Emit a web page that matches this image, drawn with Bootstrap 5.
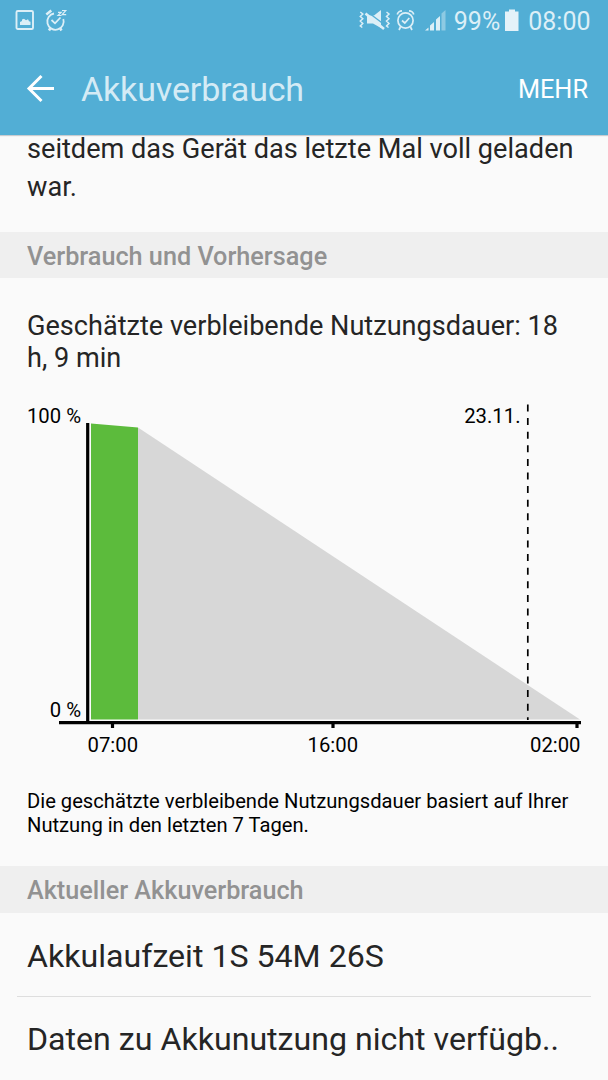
<!DOCTYPE html>
<html lang="de">
<head>
<meta charset="utf-8">
<meta name="viewport" content="width=device-width, initial-scale=1">
<title>Akkuverbrauch</title>
<link href="https://cdn.jsdelivr.net/npm/bootstrap@5.3.0/dist/css/bootstrap.min.css" rel="stylesheet">
<style>
body{font-family:Roboto,"Noto Sans",sans-serif;background:#fafafa;color:#252525;height:1080px;overflow:hidden}
.app-head{height:135px;background:#52aed5;box-shadow:0 1px 1px #c9ccd0}
.status-row{height:42px;padding:0 17.500px 0 15px;color:#dceff7;font-size:25px;line-height:40px}
.status-row span{padding-top:2px}
.status-row svg,.title-row svg{display:block;flex:none}
.title-row{height:93px;padding:0 20px 0 26px;color:#fff}
.page-title{font-size:34px;line-height:40px;color:#d4ebf5;letter-spacing:-.15px;padding-left:1px}
.more-btn{font-size:25.3px;line-height:30px;color:#fff;padding-top:2px}
.intro{height:96.500px;padding:1px 27px 0;font-size:27.130px}
.intro-first{line-height:27px}
.intro-last{line-height:48px}
.section-title{height:46.500px;padding:2px 27px 0;background:#efefef;color:#929292;font-size:25.230px;font-weight:500;line-height:46px}
.usage{height:588px}
.estimate{padding:32px 27px 0;font-size:27.1px;line-height:32px}
.chart{display:block;height:380px;margin-top:16px}
.chart text{font-size:20.3px;fill:#000}
.note{padding:19px 27px 0;font-size:20.180px;line-height:24px;color:#000}
.usage-item{height:83.500px;padding:3px 10px 0;margin:0 17px;font-size:32.130px;line-height:81px}
.usage-item+.usage-item{border-top:1.500px solid #dedede;padding-top:2px}
</style>
</head>
<body>
<header class="app-head">
  <div class="status-row d-flex align-items-center">
    <svg width="60" height="42" viewBox="0 0 60 42" fill="none" stroke="#dceff7">
      <rect x="1.500" y="11" width="16.500" height="18" rx="1.300" stroke-width="1.900"/>
      <path d="M5 25v-3l2-1v-1.500l2-.8 2 1.500 2-1 1 2 1.500.5V25z" fill="#dceff7" stroke="none"/>
      <path d="M39 13.500A8.200 8.200 0 1 0 48.300 19M36.500 20l3.500 3.300 5.500-5.800" stroke-width="1.800"/>
      <path d="M31.300 14.500l5-4M35.500 28l-1.500 2.500M45 28l1.500 2.500" stroke-width="2.500"/>
      <path d="M43 12.300h3.200l-3.200 3.200h3.500M47 10.500h3.800l-3.600 4.200h4" stroke-width="1.200"/>
    </svg>
    <div class="ms-auto d-flex align-items-center">
      <svg width="91" height="42" viewBox="358.500 0 91 42" fill="none" stroke="#dceff7">
        <path d="M359.800 12l2.500 2-2.500 2.500 2.500 2.300-2.500 2.200 2.500 2.500-2.500 2.500 2 1.500M386 12l2.500 2-2.500 2.500 2.500 2.300-2.500 2.200 2.500 2.500-2.500 2.500 2 1.500" stroke-width="1.500"/>
        <path d="M366.500 15.500h7l7-5.500v18l-8-4.500h-6z" fill="#dceff7" stroke="none"/>
        <path d="M366.500 11.500L385 25.500" stroke="#52aed5" stroke-width="1.300"/>
        <path d="M365 13.500L383.500 29" stroke-width="2.600"/>
        <circle cx="405" cy="20.500" r="7.600" stroke-width="1.700"/>
        <path d="M401.500 20.500l2.800 2.500 4.500-5M396.800 14.500c.3-2 2.500-3.700 4.700-3.700M408.500 10.800c2.200 0 4.400 1.700 4.700 3.700M400 27l-1.500 3M410 27l1.500 3" stroke-width="1.700"/>
        <path d="M424.500 30.500l3.500-3v3zM429.500 30.500v-5l4-3.500v8.500zM435.500 30.500V19.500l4-3.500v14.500z" fill="#dceff7" stroke="none"/>
        <path d="M441 30.500V13.500l4-3.500v20.500z" fill="#8dcae3" stroke="none"/>
      </svg>
      <span class="ms-1">99%</span>
      <svg class="ms-1" width="16" height="42" viewBox="0 0 16 42" fill="#e4f2f9"><path d="M2 11.500h3v-2h6v2h3.500V31H1V11.500z"/></svg>
      <span class="ms-2">08:00</span>
    </div>
  </div>
  <nav class="title-row d-flex align-items-center">
    <svg width="30" height="30" viewBox="0 0 30 30" fill="none" stroke="#fff" stroke-width="3"><path d="M28 14.500H3.500M15.500 2L3 14.500 15.500 27"/></svg>
    <h1 class="page-title fw-normal mb-0 ms-4">Akkuverbrauch</h1>
    <a class="more-btn ms-auto text-decoration-none" href="#">MEHR</a>
  </nav>
</header>
<main>
  <section class="intro text-nowrap">
    <div class="intro-first">seitdem das Gerät das letzte Mal voll geladen</div>
    <div class="intro-last">war.</div>
  </section>
  <h2 class="section-title mb-0">Verbrauch und Vorhersage</h2>
  <section class="usage">
    <p class="estimate mb-0">Geschätzte verbleibende Nutzungsdauer: 18<br>h, 9 min</p>
    <svg class="chart w-100" viewBox="0 390 608 380">
      <path d="M138 427.500L580 719.500H138z" fill="#d7d7d7"/>
      <path d="M91 423.500L138 427.500V719.500H91z" fill="#5cbb3c"/>
      <path d="M87.700 423V723M59 722.700H581M112.500 723v5M333 723v5M577 723v5" stroke="#000" stroke-width="3.200"/>
      <path d="M527.800 404.500V720" stroke="#000" stroke-width="1.700" stroke-dasharray="7 6.600"/>
      <text x="81" y="423" text-anchor="end">100 %</text>
      <text x="81" y="716.500" text-anchor="end">0 %</text>
      <text x="520.500" y="423" text-anchor="end">23.11.</text>
      <text x="112.800" y="752" text-anchor="middle">07:00</text>
      <text x="332.800" y="752" text-anchor="middle">16:00</text>
      <text x="580.500" y="752" text-anchor="end">02:00</text>
    </svg>
    <p class="note mb-0">Die geschätzte verbleibende Nutzungsdauer basiert auf Ihrer<br>Nutzung in den letzten 7 Tagen.</p>
  </section>
  <h2 class="section-title mb-0">Aktueller Akkuverbrauch</h2>
  <section>
    <div class="usage-item text-nowrap">Akkulaufzeit 1S 54M 26S</div>
    <div class="usage-item text-nowrap">Daten zu Akkunutzung nicht verfügb..</div>
  </section>
</main>
<script src="https://cdn.jsdelivr.net/npm/bootstrap@5.3.0/dist/js/bootstrap.bundle.min.js"></script>
</body>
</html>
